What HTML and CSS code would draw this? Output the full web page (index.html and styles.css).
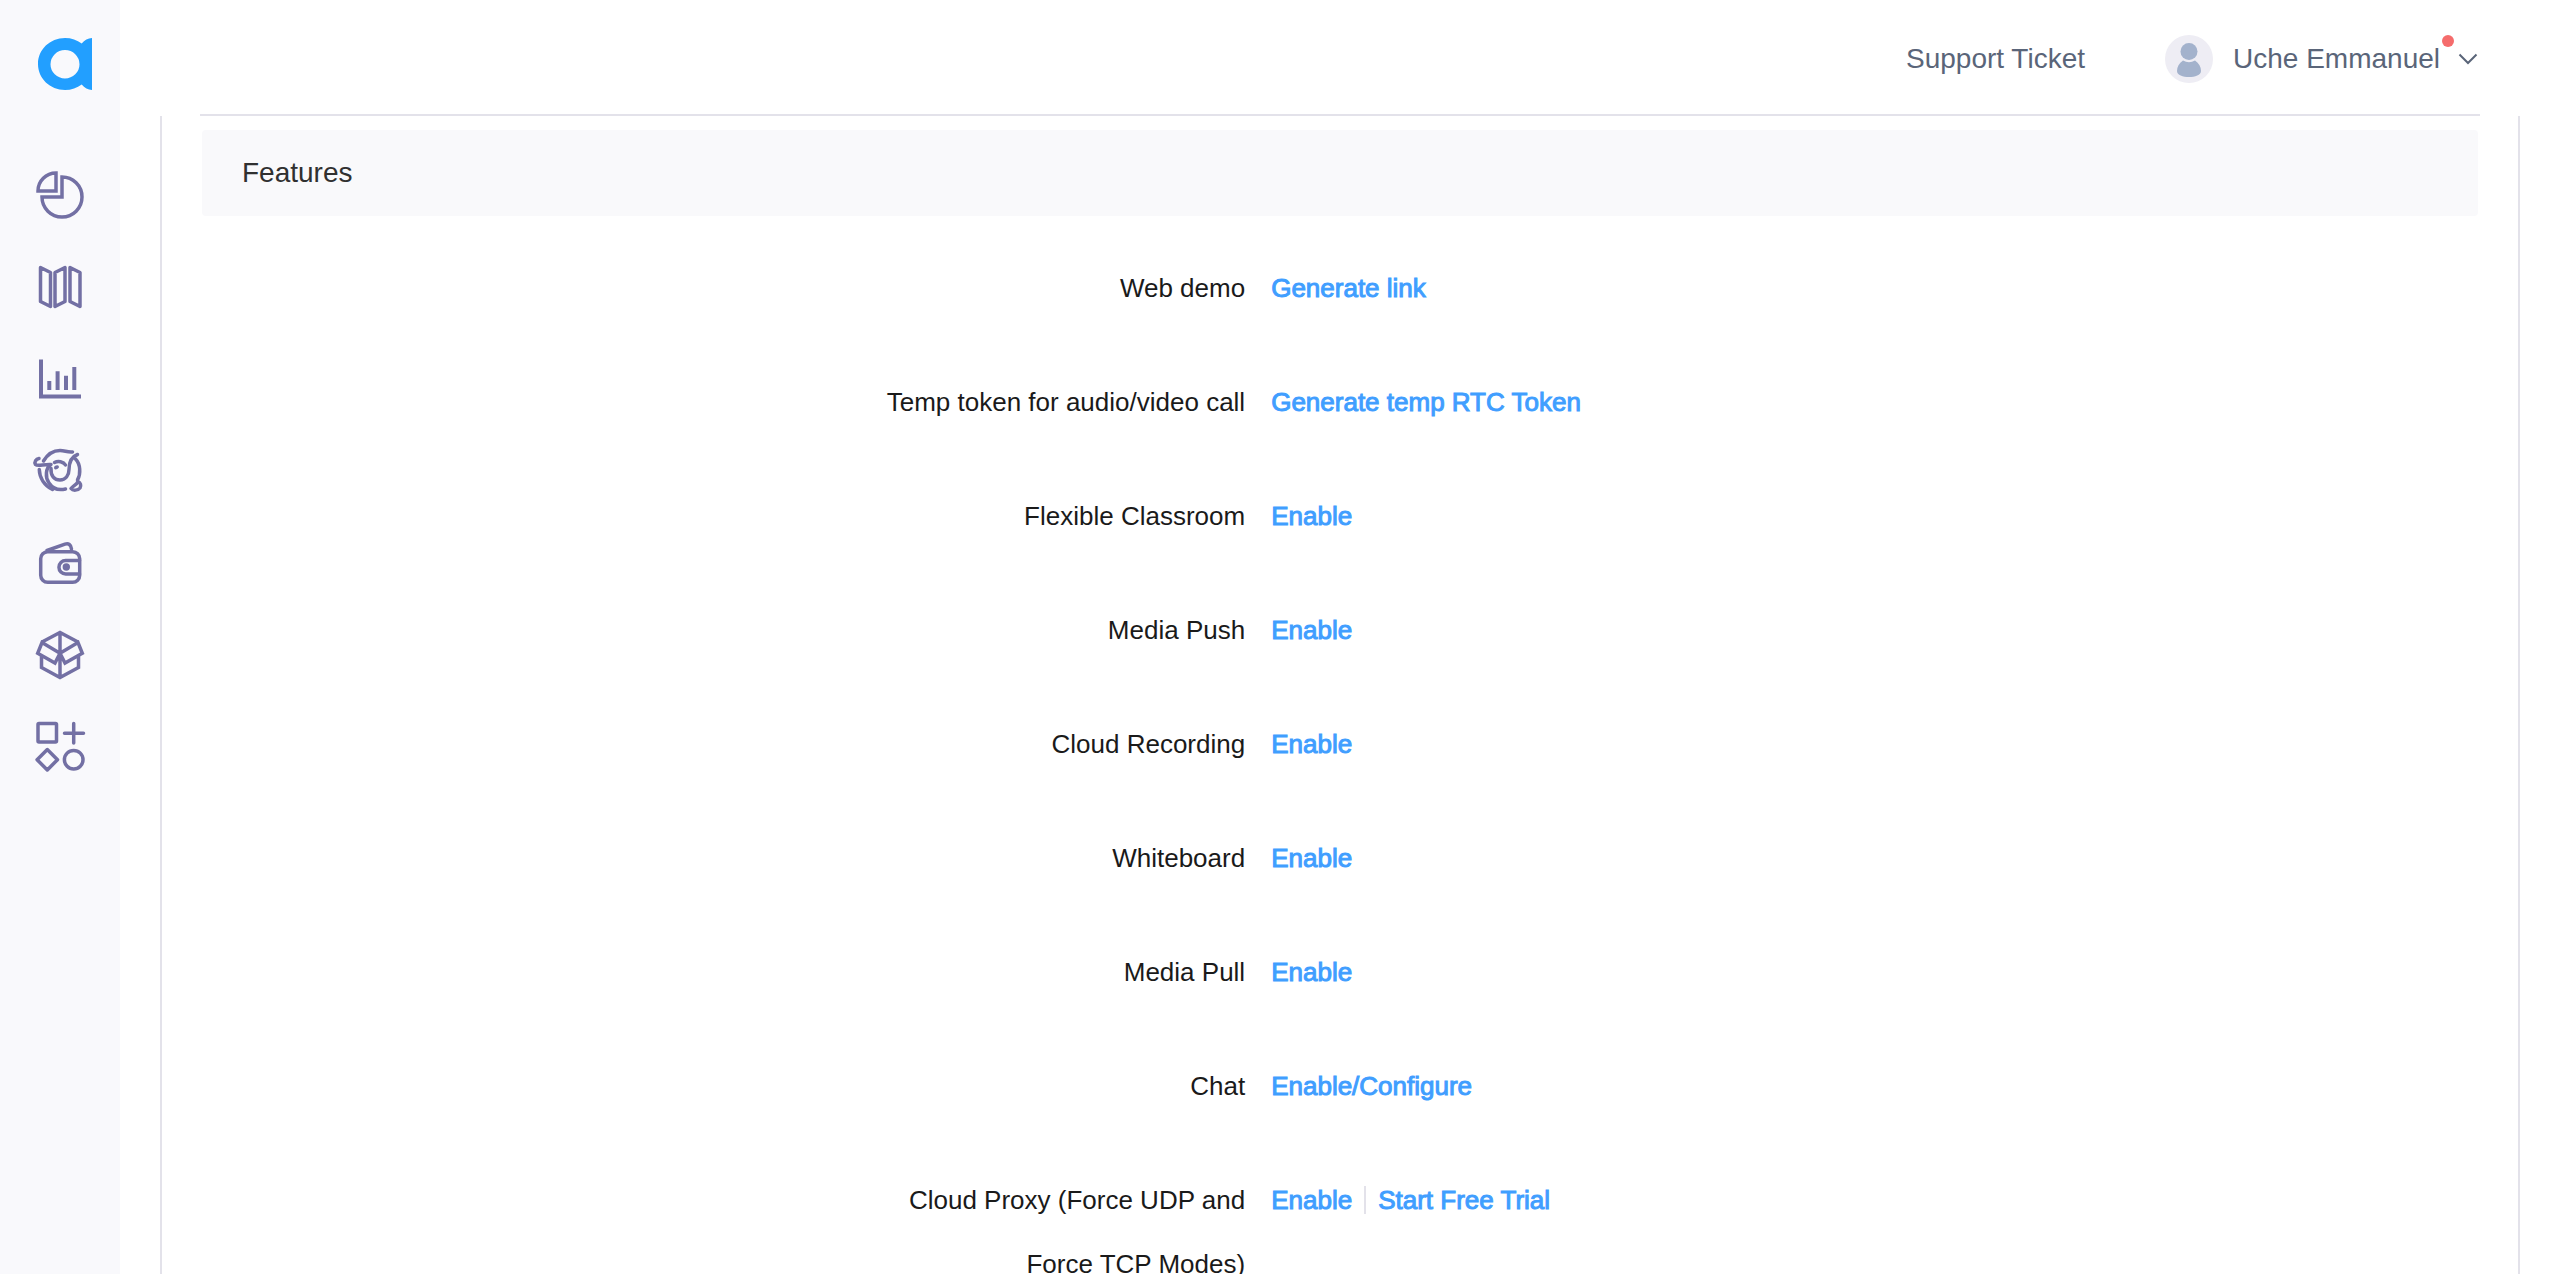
FILE: index.html
```html
<!DOCTYPE html>
<html lang="en">
<head>
  <meta charset="UTF-8" />
  <meta name="viewport" content="width=device-width, initial-scale=1.0"/>
  <title>Project Features</title>
  <link rel="stylesheet" href="styles.css">
</head>
<body>
  <aside class="sidebar">
    <a href="#" class="logo" aria-label="Home">
      <svg viewBox="0 0 54 52" width="54" height="52">
        <path fill="#229fff" fill-rule="evenodd" d="M27 0C33.500 0 39 2 43.700 5.500C46.500 2 50 0.200 54 0V52C50 51.800 46.500 50 43.700 46.500C39 50 33.500 52 27 52C12 52 0 40.400 0 26S12 0 27 0ZM27 12A14.500 14.200 0 1 0 27 40.400A14.500 14.200 0 1 0 27 12Z"/>
      </svg>
    </a>
    <nav class="menu">
      <a href="#" aria-label="Overview">
        <svg viewBox="0 0 48 48"><path class="miter" d="M20 2V20H2A18 18 0 0 1 20 2Z"/><path class="miter" d="M26 6V26H6A20 20 0 1 0 26 6Z"/></svg>
      </a>
      <a href="#" aria-label="Projects">
        <svg viewBox="0 0 48 48"><path d="M4.500 4.500L14.500 9.500V43.500L4.500 38.500ZM19 9.500L29 4.500V38.500L19 43.500ZM34 4.500L44 9.500V43.500L34 38.500Z"/></svg>
      </a>
      <a href="#" aria-label="Usage">
        <svg viewBox="0 0 48 48"><path class="sharp" d="M5 4.500V41.500H45M13.300 26V35M21.600 16.300V35M30 20.700V35M38.300 12V35"/></svg>
      </a>
      <a href="#" aria-label="Analytics">
        <svg viewBox="0 0 48 48" class="bird">
          <path d="M7.500 14C12 6.500 18 3.500 24 3.500C29 3.500 31 5.500 36.500 5"/>
          <path d="M3 11.500C0 12-2 15-.500 17.500C1.500 19.500 8 17 15 17.500C9.500 21 9 30 13 36C17 42 23 43.500 29.500 42"/>
          <path d="M3.300 22.500C3.500 31 8.500 38.500 16.500 42.500"/>
          <path d="M15 21.500C14.500 29 18.500 33 24 33C29.500 33 33 28.500 33 22.500C33 16.500 35 10 41.500 7.500"/>
          <path d="M18.500 15.500C22 13.500 27.500 14.500 29.500 18"/>
          <path d="M39.500 12C44.500 17 45 27 41.500 33"/>
          <path d="M42 34.500C40.500 38 37.500 38.500 35 41.500C37 44 42 43.500 44 41C45.500 38.500 44.500 35.500 42 34.500Z"/>
          <ellipse class="solid" cx="20.300" cy="20.500" rx="2.600" ry="1.900" transform="rotate(-25 20 20)"/>
        </svg>
      </a>
      <a href="#" aria-label="Billing">
        <svg viewBox="0 0 48 48"><rect x="4.700" y="12.700" width="39" height="30.600" rx="7"/><path d="M11 11.500L29 5.200C32.500 4 35 5.500 35.500 10"/><path d="M43.500 21.500H29.700A6.700 6.700 0 0 0 29.700 35H43.500"/><circle class="solid" cx="30.300" cy="28" r="3.700"/></svg>
      </a>
      <a href="#" aria-label="Packages">
        <svg viewBox="0 0 48 48"><path class="miter" d="M6 11L24 1.500L42 11M24 1.500V46.500M24 22.300L6 11.500L1.700 22.300L19 32L24 22.300L42 11.500L46.300 22.300L29 32L24 22.300M5.500 25.500V36.500L24 46.500L42.500 36.500V25.500"/></svg>
      </a>
      <a href="#" aria-label="Extensions">
        <svg viewBox="0 0 48 48"><rect x="2" y="0.500" width="18.500" height="18.500" rx="1"/><path d="M37.700 0.500V20M28.500 10.200H47.500M11.300 26.500L21.500 36.700L11.300 46.900L1.100 36.700Z"/><circle cx="37.700" cy="36.700" r="9.300"/></svg>
      </a>
    </nav>
  </aside>

  <div class="page">
    <header class="topbar">
      <a href="#" class="support">Support Ticket</a>
      <button type="button" class="user">
        <svg class="avatar" viewBox="0 0 48 48">
          <circle cx="24" cy="24" r="24" fill="#eeedf4"/>
          <circle cx="24" cy="16.500" r="8.500" fill="#a3b2cc"/>
          <path fill="#a3b2cc" d="M18 25.500Q24 29 30 25.500C34 28 36 32 36 36C36 40 30 42 24 42S12 40 12 36C12 32 14 28 18 25.500Z"/>
        </svg>
        <span class="name">Uche Emmanuel<span class="dot"></span></span>
        <svg class="chevron" viewBox="0 0 20 12"><path d="M1.500 1.500L10 10L18.500 1.500"/></svg>
      </button>
    </header>

    <main class="panel">
      <h2>Features</h2>
      <div class="row">
        <span class="label">Web demo</span>
        <div class="actions"><a href="#">Generate link</a></div>
      </div>
      <div class="row">
        <span class="label">Temp token for audio/video call</span>
        <div class="actions"><a href="#">Generate temp RTC Token</a></div>
      </div>
      <div class="row">
        <span class="label">Flexible Classroom</span>
        <div class="actions"><a href="#">Enable</a></div>
      </div>
      <div class="row">
        <span class="label">Media Push</span>
        <div class="actions"><a href="#">Enable</a></div>
      </div>
      <div class="row">
        <span class="label">Cloud Recording</span>
        <div class="actions"><a href="#">Enable</a></div>
      </div>
      <div class="row">
        <span class="label">Whiteboard</span>
        <div class="actions"><a href="#">Enable</a></div>
      </div>
      <div class="row">
        <span class="label">Media Pull</span>
        <div class="actions"><a href="#">Enable</a></div>
      </div>
      <div class="row">
        <span class="label">Chat</span>
        <div class="actions"><a href="#">Enable/Configure</a></div>
      </div>
      <div class="row">
        <span class="label">Cloud Proxy (Force UDP and Force TCP Modes)</span>
        <div class="actions"><a href="#">Enable</a><a href="#">Start Free Trial</a></div>
      </div>
    </main>
  </div>
</body>
</html>
```
FILE: styles.css
```css
* {
  box-sizing: border-box;
}

body {
  margin: 0;
  height: 100vh;
  display: flex;
  overflow: hidden;
  font-family: "Liberation Sans", Arial, sans-serif;
  font-size: 26px;
  color: #1a1a1a;
  background: #fff;
}

a {
  text-decoration: none;
}

.sidebar {
  flex: none;
  width: 120px;
  padding-top: 38px;
  background: #f9f9fc;
}

.logo {
  display: block;
  height: 52px;
  padding-left: 38px;
}

.menu {
  display: flex;
  flex-direction: column;
  align-items: center;
  gap: 44px;
  margin-top: 81px;
}

.menu a {
  height: 48px;
}

.menu svg {
  display: block;
  width: 48px;
  height: 48px;
  overflow: visible;
  fill: none;
  stroke: #7370a4;
  stroke-width: 3.5;
  stroke-linecap: round;
  stroke-linejoin: round;
}

.menu .sharp {
  stroke-width: 4;
  stroke-linecap: butt;
  stroke-linejoin: miter;
}

.menu .miter {
  stroke-linecap: butt;
  stroke-linejoin: miter;
}

.menu .solid {
  fill: #7370a4;
  stroke: none;
}

.page {
  flex: 1;
  display: flex;
  flex-direction: column;
  padding: 0 40px;
}

.topbar {
  flex: none;
  display: flex;
  align-items: center;
  justify-content: flex-end;
  gap: 80px;
  height: 116px;
  margin: 0 40px;
  padding-top: 4px;
  border-bottom: 2px solid #e3e2ea;
  font-size: 28px;
}

.support,
.user {
  color: #5a6579;
}

.user {
  display: flex;
  align-items: center;
  padding: 0;
  border: none;
  background: none;
  font: inherit;
  cursor: pointer;
}

.avatar {
  width: 48px;
  height: 48px;
  margin-right: 20px;
}

.name {
  position: relative;
}

.dot {
  position: absolute;
  top: -8px;
  right: -14px;
  width: 12px;
  height: 12px;
  border-radius: 50%;
  background: #f56c6c;
}

.chevron {
  width: 20px;
  height: 12px;
  margin: 0 2px 0 18px;
  fill: none;
  stroke: #5a6579;
  stroke-width: 2;
}

.panel {
  flex: 1;
  padding: 14px 40px;
  border: solid #e3e2ea;
  border-width: 0 2px;
}

h2 {
  margin: 0 0 40px;
  padding: 0 40px;
  border-radius: 4px;
  background: #f9f9fb;
  color: #303030;
  font-size: 28px;
  font-weight: normal;
  line-height: 86px;
}

.row {
  display: grid;
  grid-template-columns: 11fr 13fr;
  margin-bottom: 50px;
  line-height: 64px;
}

.label {
  justify-self: end;
  max-width: 380px;
  text-align: right;
}

.actions {
  display: flex;
  align-items: center;
  height: 64px;
  padding-left: 26px;
}

.actions a {
  color: #409eff;
  line-height: 28px;
  -webkit-text-stroke: 1px #409eff;
}

.actions a + a {
  margin-left: 12px;
  padding-left: 12px;
  border-left: 2px solid #e3e2ea;
}
```
